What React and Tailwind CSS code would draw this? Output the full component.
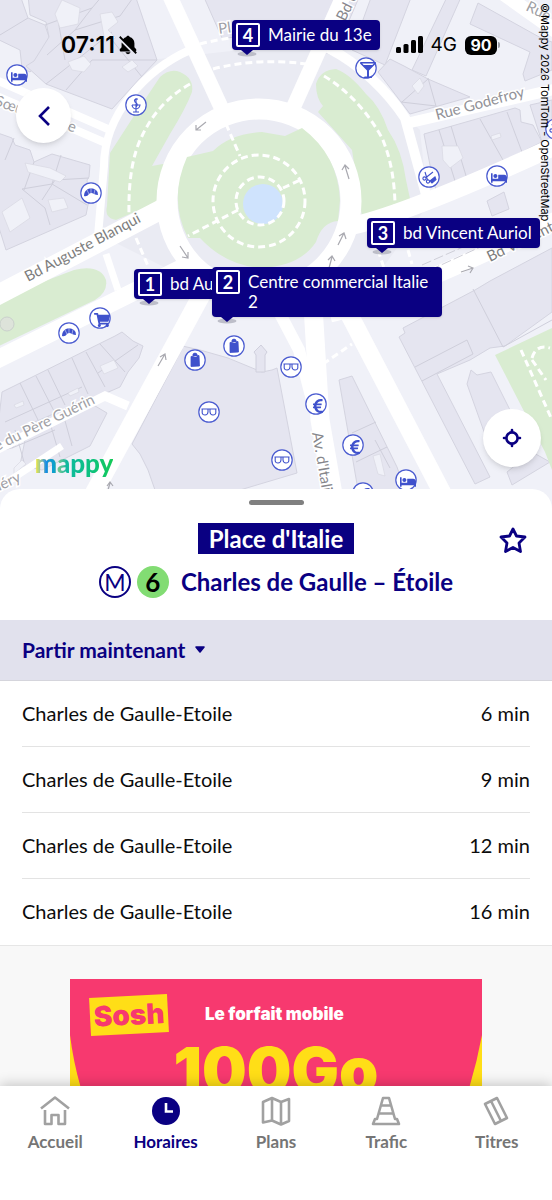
import React, { useState } from 'react'
import { FaBed, FaEuroSign, FaGlassMartiniAlt, FaShoppingCart } from 'react-icons/fa'
import { BiSolidBellOff } from 'react-icons/bi'

const departures = [
	{ id: 1, to: 'Charles de Gaulle-Etoile', wait: '6 min' },
	{ id: 2, to: 'Charles de Gaulle-Etoile', wait: '9 min' },
	{ id: 3, to: 'Charles de Gaulle-Etoile', wait: '12 min' },
	{ id: 4, to: 'Charles de Gaulle-Etoile', wait: '16 min' },
]

const buildings = [
	'-5,-5 20,-5 28,18 45,25 50,40 45,58 30,72 22,68 20,50 -5,38',
	'28,-5 135,-5 157,60 141,77 112,109 46,84 26,66 34,61 49,37 46,22 30,15',
	'203,-5 360,-5 345,30 332,55 300,42 262,36 222,38',
	'372,-5 412,-5 385,65 352,50',
	'448,-5 462,-5 426,76 412,70',
	'478,3 541,38 552,42 552,70 525,81 523,74 530,52 470,24',
	'378,72 390,59 404,66 428,79 470,97 410,114 401,102',
	'424,134 515,108 520,110 521,122 533,125 542,142 437,194 430,165',
	'530,105 552,100 552,140 542,142',
	'-5,132 12,138 15,145 30,150 34,162 52,154 90,165 89,177 87,180 89,200 86,215 6,250 -5,215',
	'487,201 504,192 509,209 492,216',
	'2,392 115,336 122,332 133,341 143,346 139,358 128,372 120,387 90,400 45,420 12,448 -5,452',
	'28,425 85,400 107,413 90,446 42,470 20,465',
	'182,349 178,345 200,350 228,358 262,372 272,370 277,368 297,473 240,490 155,490 148,470 140,454 132,444',
	'339,380 352,376 397,467 405,490 358,490 352,455',
	'399,337 405,333 403,328 475,290 490,281 552,248 552,312 505,346 490,348 470,360 437,374 490,477 475,484',
	'467,384 471,370 477,375 491,372 513,416 507,425 487,440',
	'507,472 532,452 550,462 512,485',
]

const buildingLines = [
	'M28,18L-5,38M45,25L92,8L103,-5M47,55L75,30L92,8M75,30L120,16L135,-5M112,32L46,84M92,60L66,90M108,35L142,77M92,60L157,60M58,20L65,60',
	'M14,138L5,160M34,162L24,190M61,155L52,184L22,189M89,178L55,180L42,200M52,184L87,205M22,189L45,208L50,225',
	'M439,130L456,184M451,126L467,179M480,119L503,160M507,112L522,152M428,78L436,106L401,102M428,79L402,102',
	'M20,383L38,420M36,376L54,411M48,370L65,405M72,358L88,394M86,352L105,387M100,344L125,372M5,422L82,387M98,373L138,345M15,430L24,462M48,416L60,457M62,410L72,446M12,448L55,430',
	'M415,367L467,340L473,354L422,381M473,289L503,347L552,320M352,433L376,422M356,462L387,447M375,440L390,468',
]

const roads = [
	{ d: 'M168,-8L226,118', w: 15 },
	{ d: 'M345,-8L294,106', w: 15 },
	{ d: 'M190,50C145,70 104,115 104,166L98,236', w: 8 },
	{ d: 'M328,48C360,64 388,92 405,118L428,202', w: 10 },
	{ d: 'M404,124L560,88', w: 11 },
	{ d: 'M498,-10L560,34', w: 14 },
	{ d: 'M-8,78L110,130', w: 8 },
	{ d: 'M-8,94L108,144', w: 8 },
	{ d: 'M-8,298L164,208', w: 20 },
	{ d: 'M-8,362L182,268', w: 18 },
	{ d: 'M340,228Q390,222 560,144', w: 18 },
	{ d: 'M330,314Q390,300 560,218', w: 17 },
	{ d: 'M167,206L205,272', w: 20 },
	{ d: 'M350,212L318,284', w: 18 },
	{ d: 'M212,280Q258,312 330,290', w: 26 },
	{ d: 'M207,285L90,500', w: 18 },
	{ d: 'M313,306L320,420L334,500', w: 19 },
	{ d: 'M278,310L299,350L312,400', w: 12 },
	{ d: 'M348,312L446,500', w: 18 },
	{ d: 'M-8,452L105,396L128,406', w: 9 },
	{ d: 'M-8,492L62,446', w: 7 },
	{ d: 'M106,254L118,290', w: 7 },
]

const streets = [
	{ name: 'Bd Auguste Blanqui', x: 28, y: 282, r: -28, c: '#7d7d7d' },
	{ name: 'Rue Godefroy', x: 437, y: 120, r: -15, c: '#929298' },
	{ name: "Av. d'Italie", x: 312, y: 433, r: 80, c: '#86868b' },
	{ name: 'Rue du Père Guérin', x: -19, y: 459, r: -26, c: '#a0a0a5' },
	{ name: 'Bd Vincent Auriol', x: 490, y: 262, r: -26, c: '#7d7d7d' },
	{ name: 'Bd de', x: 345, y: 22, r: -64, c: '#86868b' },
	{ name: 'Rue', x: 525, y: 10, r: 26, c: '#a0a0a5' },
	{ name: 'Pl.', x: 219, y: 34, r: -8, c: '#a0a0a5' },
	{ name: 'Sœur Rosalie', x: -6, y: 105, r: 19, c: '#a0a0a5' },
	{ name: 'Méry', x: -10, y: 495, r: -24, c: '#a0a0a5' },
]

const pois = [
	{ type: 'bed', x: 17, y: 75 },
	{ type: 'pharmacy', x: 136, y: 105 },
	{ type: 'bakery', x: 91, y: 193 },
	{ type: 'bar', x: 366, y: 68 },
	{ type: 'hair', x: 429, y: 177 },
	{ type: 'bed', x: 497, y: 176 },
	{ type: 'hair', x: 556, y: 129 },
	{ type: 'bakery', x: 69, y: 333 },
	{ type: 'cart', x: 100, y: 318 },
	{ type: 'bag', x: 195, y: 360 },
	{ type: 'bag', x: 234, y: 346 },
	{ type: 'glasses', x: 291, y: 367 },
	{ type: 'glasses', x: 209, y: 412 },
	{ type: 'glasses', x: 282, y: 460 },
	{ type: 'euro', x: 316, y: 404 },
	{ type: 'euro', x: 353, y: 445 },
	{ type: 'bed', x: 406, y: 480 },
	{ type: 'euro', x: 363, y: 493 },
]

const poiIcons = {
	bed: FaBed,
	bar: FaGlassMartiniAlt,
	cart: FaShoppingCart,
	euro: FaEuroSign,
}

function Poi({ type, x, y }) {
	const Icon = poiIcons[type]
	return (
		<g transform={`translate(${x} ${y})`} color="#3f51cc">
			<circle r="10.2" fill="#fff" stroke="#4a5bd0" strokeWidth="1.2" />
			{Icon && <Icon x="-6" y="-6" width="12" height="12" />}
			{type === 'bakery' && (
				<g>
					<path d="M-7,3Q-7,-2 -3,-4Q1,-6 5,-3Q7.5,-1 7,2Q5,2 3,1Q0,-1 -2,1Q-4,4 -7,3Z" fill="currentColor" />
					<path d="M-4,-3L-2,1M0,-5V0M4,-3.5L3,1" stroke="#fff" strokeWidth="0.5" />
				</g>
			)}
			{type === 'hair' && (
				<g fill="none" stroke="currentColor" strokeWidth="1.1">
					<circle cx="-4.5" cy="1.500" r="1.600" />
					<circle cx="-1" cy="4.5" r="1.6" />
					<path d="M-3,0.5L4,-5M-1.500,3L-4,-5" />
					<path d="M1,4L6,0L7,2.5L3,6Z" fill="currentColor" />
				</g>
			)}
			{type === 'bag' && (
				<path d="M-4,-3.5L4,-4.5L4.5,6L-4,6.5ZM-2,-3V-6Q0,-8 2,-6V-3" fill="currentColor" fillRule="evenodd" stroke="currentColor" strokeWidth="0.8" />
			)}
			{type === 'glasses' && (
				<path d="M-7.5,-3H7.5M-6.8,-3V1Q-6.5,3 -4,3Q-1.3,3 -1,0V-3M6.8,-3V1Q6.5,3 4,3Q1.3,3 1,0V-3" fill="none" stroke="currentColor" strokeWidth="1.1" />
			)}
			{type === 'pharmacy' && (
				<path d="M-4,0H4Q3.5,3.5 0,4Q-3.5,3.5 -4,0M0,-7V7M-3,7H3M2,-6Q-3,-6 -1,-3Q3,-1 0,2" fill="none" stroke="currentColor" strokeWidth="1.1" />
			)}
		</g>
	)
}

function MapDrawing() {
	return (
		<svg className="block h-full w-full" viewBox="0 0 552 509" preserveAspectRatio="xMidYMin slice" aria-hidden="true">
			<rect width="552" height="509" fill="#f0f1f8" />

			{/* blocks around the square */}
			<path d="M150,60L330,40L420,130L428,205L345,320L170,270L100,235L108,140Z" fill="#eaebf3" />
			<g fill="#e5e5f0" stroke="#d4d4e0" strokeWidth="1">
				{buildings.map(points => <polygon key={points} points={points} />)}
			</g>
			<g fill="none" stroke="#cfcfdb" strokeWidth="1">
				{buildingLines.map(d => <path key={d} d={d} />)}
			</g>
			<g fill="#f0f1f8" stroke="#d8d8e3" strokeWidth="0.7">
				<path d="M62,0L80,8L78,24L60,28L55,14ZM100,14L112,12L118,22L108,30L116,38L105,42ZM68,62L84,56L91,64L84,72L72,70ZM2,212L22,198L30,218L10,232ZM48,200L64,198L68,208L52,212ZM25,163L50,168L66,176L60,182L28,172Z" />
				<path d="M122,67L132,60L138,66L128,72ZM442,146L458,146L463,158L450,168L443,160ZM412,86L420,78L424,86L418,94ZM491,136L500,133L501,137L492,140ZM100,366L114,360L118,368L104,374ZM14,405L23,401L24,405L16,408ZM68,393L78,388L79,392L70,396ZM14,468L22,460L26,464L14,474ZM373,456L380,454L385,476L378,474Z" />
			</g>
			<path d="M261,345L267,352L265,355V372H256V355L254,352Z" fill="#e5e5f0" stroke="#d0d0dd" />

			{/* parks */}
			<g fill="#d9ecd1">
				<path d="M-5,300L74,270Q100,264 106,280Q108,292 95,300L-5,348Z" />
				<path d="M495,355L552,328V470L545,452Z" />
				<path d="M110,153L130,122L160,77Q170,68 180,72Q194,78 192,92Q186,108 170,134L152,166L168,163L162,200L116,220Q104,218 107,206Z" />
				<path d="M316,84Q320,70 336,69Q350,74 366,94Q380,106 388,130Q402,150 406,180L412,208Q385,214 362,216L352,150L318,112L323,106Q316,98 316,84Z" />
			</g>

			<g fill="none" stroke="#fff">
				{roads.map(r => <path key={r.d} d={r.d} strokeWidth={r.w} />)}
			</g>
			<circle cx="259" cy="201" r="92" fill="#eaebf3" stroke="#fff" strokeWidth="21" />
			<path d="M187,157L213,151Q230,134 262,132L285,136L302,128Q338,155 340,200L338,221Q322,222 316,242Q300,266 262,268Q226,266 200,238L188,238Q168,200 187,157Z" fill="#d9ecd1" />
			<circle cx="263" cy="204" r="20" fill="#cfe3fd" />
			<circle cx="7" cy="324" r="7" fill="#dde3da" stroke="#cad0cc" />

			{/* footpaths */}
			<g fill="none" stroke="#fff" strokeWidth="3" strokeDasharray="7 4">
				<circle cx="260" cy="201" r="24" />
				<circle cx="259" cy="201" r="46" />
				<path d="M190,84Q158,102 142,136Q128,164 129,214" />
				<path d="M324,76Q360,98 382,138Q396,170 395,216" />
				<path d="M200,44Q260,28 320,46M213,69Q262,56 320,66" />
				<path d="M226,124L240,156M238,210L188,236M283,188L300,180M136,238L148,266M378,250L384,268M408,250L412,264" />
				<path d="M323,364L352,344M521,350L552,420M532,358Q536,344 550,348M532,360L546,380" />
			</g>
			<path d="M422,265L520,222M430,270L500,238" stroke="#cfcfd8" strokeWidth="1" strokeDasharray="10 3" fill="none" />

			<g fill="none" stroke="#a9a9b0" strokeWidth="1.2">
				<path d="M206,122L196,130M201,130H196V125" />
				<path d="M349,179L345,166M342,170L345,165L349,169" />
				<path d="M338,245L344,233M339,236L344,233L346,239" />
				<path d="M158,366L165,354M160,357L165,354L166,360" />
				<path d="M180,246L188,258M182,257L188,258V252" />
				<path d="M461,272L473,268M468,266L473,268L470,273" />
				<path d="M329,268L332,257M328,260L332,256L335,261" />
				<path d="M108,490L110,483M107,486L110,482L113,486" />
			</g>

			<g fontFamily="Lato, sans-serif" fontSize="15" stroke="#fff" strokeWidth="3" paintOrder="stroke">
				{streets.map(s => (
					<text key={s.name} transform={`translate(${s.x} ${s.y}) rotate(${s.r})`} fill={s.c}>{s.name}</text>
				))}
			</g>
			{pois.map(p => <Poi key={`${p.x}-${p.y}`} {...p} />)}
		</svg>
	)
}

function Callout({ number, children, className }) {
	return (
		<div className={`absolute flex items-start rounded-sm bg-[#0a0082] py-[3px] pr-2 pl-1 text-white shadow-sm ${className}`}>
			<span className="flex h-6 w-6 shrink-0 items-center justify-center rounded-xs border-2 border-white text-[18px] font-bold">{number}</span>
			<span className="ml-2 py-0.5 text-[17px] leading-5">{children}</span>
			<svg className="absolute top-full left-1" width="22" height="7" viewBox="0 0 22 7" aria-hidden="true">
				<ellipse cx="11" cy="4" rx="9.5" ry="2.5" fill="#b0b1bd" opacity="0.8" />
				<path d="M5,0H17L11,5Z" fill="#0a0082" />
			</svg>
		</div>
	)
}

function StatusBar() {
	return (
		<div className="absolute inset-x-0 top-[33px] flex h-6 items-center justify-between pr-[52px] pl-[61px] text-black">
			<div className="flex items-center gap-0.5">
				<span className="font-[Inter,sans-serif] text-[23px] font-semibold">07:11</span>
				<BiSolidBellOff className="h-[22px] w-[22px]" />
			</div>
			<div className="flex items-center gap-2">
				<svg width="27" height="18" viewBox="0 0 27 18" aria-hidden="true">
					<rect x="0" y="11" width="5" height="6" rx="1.5" />
					<rect x="7.5" y="8" width="5" height="9" rx="1.5" />
					<rect x="15" y="4" width="5" height="13" rx="1.5" />
					<rect x="22" y="0" width="5" height="17" rx="1.5" />
				</svg>
				<span className="font-[Inter,sans-serif] text-[19px]">4G</span>
				<div className="flex items-center gap-px">
					<span className="flex h-[19px] w-8 items-center justify-center rounded-md bg-black font-[Inter,sans-serif] text-[16px] font-bold text-white">90</span>
					<span className="h-1.5 w-0.5 rounded-r-full bg-[#9b9ba3]"></span>
				</div>
			</div>
		</div>
	)
}

const navIcons = {
	home: <path d="M1,12.5L15,1.5L29,12.5M5,14V28H11.5V19H18.5V28H25V14" />,
	map: <path d="M2,6L11,2L20,6L28,3V25L20,28.5L11,24.5L2,26.5ZM11,2V24.5M20,6V28.5" />,
	cone: <path d="M12,2H18L24,23H26L28,28H2L4,23H6ZM10,9.5H20M8,17.5H22" />,
	tickets: <path d="M3,8L15,2L25,22L13,28ZM9,5L19,25" />,
}

const tabs = [
	{ id: 'accueil', label: 'Accueil', icon: 'home' },
	{ id: 'horaires', label: 'Horaires', icon: 'clock' },
	{ id: 'plans', label: 'Plans', icon: 'map' },
	{ id: 'trafic', label: 'Trafic', icon: 'cone' },
	{ id: 'titres', label: 'Titres', icon: 'tickets' },
]

function TabIcon({ name }) {
	if (name === 'clock') {
		return (
			<svg width="30" height="30" viewBox="0 0 30 30" aria-hidden="true">
				<circle cx="15" cy="15" r="14" fill="#0a0082" />
				<path d="M15,7V15.5H22" fill="none" stroke="#fff" strokeWidth="2.6" />
			</svg>
		)
	}
	return (
		<svg width="30" height="30" viewBox="0 0 30 30" fill="none" stroke="#a1a1a1" strokeWidth="2.6" strokeLinejoin="round" aria-hidden="true">
			{navIcons[name]}
		</svg>
	)
}

function SoshAd() {
	return (
		<a href="#sosh" className="relative mx-auto mt-[33px] block h-[343px] w-[412px] shrink-0 overflow-hidden bg-[#ffde17] font-[Inter,sans-serif]">
			<svg className="absolute inset-0" width="412" height="343" viewBox="0 0 412 343" aria-hidden="true">
				<path d="M0,0H412V56Q400,120 375,170Q300,250 206,250Q112,250 37,170Q8,120 0,56Z" fill="#f7396f" />
			</svg>
			<div className="relative flex items-center pt-[17px] pl-5">
				<span className="flex h-[38px] w-[78px] -rotate-3 items-center justify-center bg-[#ffde17] text-[28px] font-black text-[#f7396f]">Sosh</span>
				<span className="ml-[37px] text-[17px] font-black text-white">Le forfait mobile</span>
			</div>
			<p className="relative text-center text-[63px] leading-[72px] font-black text-[#ffde17]">100Go</p>
		</a>
	)
}

function App() {
	const [favorite, setFavorite] = useState(false)
	const [tab, setTab] = useState('horaires')

	return (
		<div className="flex h-screen flex-col overflow-hidden bg-white font-[Lato,sans-serif]">
			<main className="flex min-h-0 flex-1 flex-col overflow-hidden">
				<section className="relative isolate h-[509px] shrink-0 overflow-hidden" aria-label="Plan du quartier">
					<div className="absolute inset-0 -z-20">
						<MapDrawing />
					</div>
					<Callout number="4" className="top-5 left-[232px]">Mairie du 13e</Callout>
					<Callout number="3" className="top-[218px] left-[367px]">bd Vincent Auriol</Callout>
					<Callout number="1" className="top-[269px] left-[134px]">bd Au</Callout>
					<Callout number="2" className="top-[267px] left-[212px] min-h-[50px] w-[230px]">Centre commercial Italie 2</Callout>

					<StatusBar />
					<button type="button" aria-label="Retour" className="absolute top-[88px] left-4 flex h-[55px] w-[55px] items-center justify-center rounded-full bg-white shadow-md">
						<svg width="14" height="22" viewBox="0 0 14 22" fill="none" stroke="#0a0082" strokeWidth="2.6" aria-hidden="true">
							<path d="M12,2L3,11L12,20" />
						</svg>
					</button>
					<button type="button" aria-label="Me localiser" className="absolute top-[409px] right-[11px] flex h-[58px] w-[58px] items-center justify-center rounded-full bg-white shadow-md">
						<svg width="20" height="20" viewBox="0 0 20 20" fill="none" stroke="#0a0082" strokeWidth="2.6" strokeLinecap="round" aria-hidden="true">
							<circle cx="10" cy="10" r="5.6" />
							<path d="M10,2V4M10,16V18M2,10H4M16,10H18" />
						</svg>
					</button>
					<span className="absolute top-px right-0 font-[Inter,sans-serif] text-[11px] leading-[14px] whitespace-nowrap text-black [writing-mode:vertical-rl]">©Mappy 2026 TomTom - OpenStreetMap</span>
					<span className="absolute top-[447px] left-[35px] bg-linear-to-r from-[#f5e51b] via-[#10b9a0] via-40% to-[#14c957] bg-clip-text text-[26px] leading-8 font-black text-transparent">
						<span className="bg-linear-to-r from-[#e8e51b] from-5% via-[#168be6] via-50% to-[#10a8c0] bg-clip-text">m</span>appy
					</span>
				</section>

				<section className="relative -mt-5 flex min-h-0 flex-1 flex-col rounded-t-[20px] bg-white">
					<div className="mx-auto mt-[11px] h-[5px] w-[55px] shrink-0 rounded-full bg-[#808080]"></div>
					<header className="relative flex shrink-0 flex-col items-center pt-[18px] pb-[22px]">
						<h1 className="bg-[#0a0082] px-[11px] text-[24px] leading-[31px] font-bold text-white">Place d'Italie</h1>
						<div className="mt-3 flex h-8 items-center">
							<span className="flex h-8 w-8 items-center justify-center rounded-full border-2 border-[#0a0082] text-[23px] text-[#0a0082]">M</span>
							<span className="ml-1.5 flex h-8 w-8 items-center justify-center rounded-full bg-[#82dc73] text-[26px] font-bold text-black">6</span>
							<h2 className="ml-3 text-[24px] leading-8 font-bold text-[#0a0082]">Charles de Gaulle – Étoile</h2>
						</div>
						<button type="button" aria-label="Ajouter aux favoris" aria-pressed={favorite} onClick={() => setFavorite(!favorite)} className="absolute top-5 right-6">
							<svg width="30" height="30" viewBox="0 0 30 30" fill={favorite ? '#0a0082' : 'none'} stroke="#0a0082" strokeWidth="2.8" strokeLinejoin="round" aria-hidden="true">
								<path d="M15,4L18.5,11L27,12L21,18L22.5,26.5L15,22.5L7.5,26.5L9,18L3,12L11.5,11Z" />
							</svg>
						</button>
					</header>

					<div className="flex h-[61px] shrink-0 items-center border-b border-[#d5d5dc] bg-[#e1e1ed] px-[22px]">
						<label htmlFor="depart" className="sr-only">Heure de départ</label>
						<select id="depart" className="appearance-none bg-transparent text-[21px] font-bold text-[#0a0082]">
							<option>Partir maintenant</option>
						</select>
						<svg className="ml-2 shrink-0" width="12" height="8" viewBox="0 0 12 8" aria-hidden="true">
							<path d="M2,1H10L6,6Z" fill="#0a0082" stroke="#0a0082" strokeWidth="1.6" strokeLinejoin="round" />
						</svg>
					</div>

					<ul className="shrink-0 px-[22px]">
						{departures.map(d => (
							<li key={d.id} className="flex h-[66px] items-center justify-between border-b border-[#e3e3e3] pb-0.5 text-[20px] text-[#0c0c0c] last:border-b-0">
								<span>{d.to}</span>
								<span>{d.wait}</span>
							</li>
						))}
					</ul>

					<div className="flex min-h-0 flex-1 flex-col overflow-hidden border-t border-[#e6e6e6] bg-[#f8f8f8]">
						<SoshAd />
					</div>
				</section>
			</main>

			<nav className="relative grid h-[114px] shrink-0 grid-cols-5 items-start bg-white pt-2.5 shadow-[0_-2px_12px_rgba(0,0,0,0.2)]">
				{tabs.map(t => (
					<a key={t.id} href={`#${t.id}`} onClick={() => setTab(t.id)} className={`flex flex-col items-center gap-0.5 text-[17px] leading-7 font-bold ${tab === t.id ? 'text-[#0a0082]' : 'text-[#757575]'}`}>
						<TabIcon name={t.icon} />
						<span>{t.label}</span>
					</a>
				))}
			</nav>
		</div>
	)
}

export default App
